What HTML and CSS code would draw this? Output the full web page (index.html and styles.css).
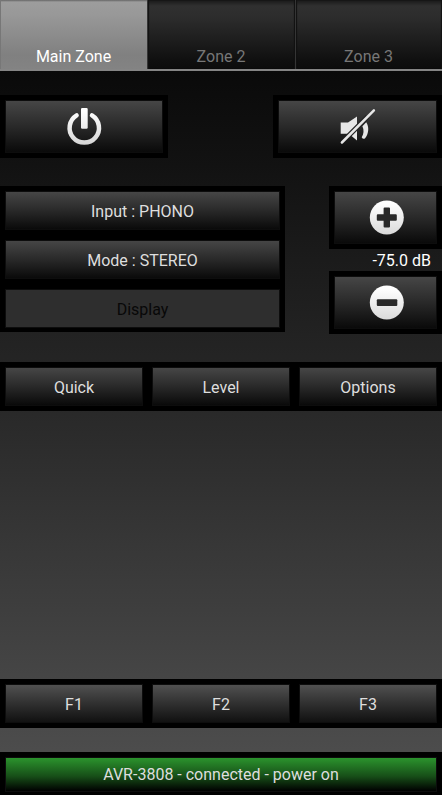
FILE: index.html
```html
<!DOCTYPE html>
<html lang="en">
<head>
<meta charset="utf-8">
<title>AVR Remote</title>
<link rel="stylesheet" href="styles.css">
</head>
<body>
<main class="app">
  <nav class="tabs">
    <a class="tab active">Main Zone</a>
    <a class="tab">Zone 2</a>
    <a class="tab">Zone 3</a>
  </nav>
  <section class="top-row">
    <div class="panel power">
      <button class="btn" aria-label="Power">
        <svg width="40" height="40" viewBox="0 0 40 40">
          <defs><linearGradient id="metal" x1="0" y1="0" x2="0" y2="40" gradientUnits="userSpaceOnUse"><stop offset="0.1" stop-color="#fff"/><stop offset="0.95" stop-color="#d6d6d6"/></linearGradient></defs>
          <path d="M12.600 8.400A14.700 14.700 0 1 0 28 8.400" fill="none" stroke="url(#metal)" stroke-width="4.500" stroke-linecap="round"/>
          <rect x="17" y="0.900" width="6.700" height="20.800" rx="1.200" fill="url(#metal)"/>
        </svg>
      </button>
    </div>
    <div class="panel mute">
      <button class="btn" aria-label="Mute">
        <svg width="40" height="40" viewBox="0.500 0 40 40">
          <g fill="#e6e6e6">
            <path d="M3.200 15.500H10.500L19.500 9.500V17.500L10.200 26.700H3.200Z"/>
            <path d="M14 29L19.500 23.500V33.500Z"/>
            <path d="M24.900 19.200L28.700 15.300C31.800 19.800 31.400 26.800 27.600 31.200Q25.600 32.800 24.200 30.300C26.300 27 26.700 23 24.900 19.200Z"/>
          </g>
          <path d="M10 29.800L30 9.700" stroke="#242424" stroke-width="4.800"/>
          <path d="M4.400 35.500L36.400 3.300" stroke="#e6e6e6" stroke-width="2.500" stroke-linecap="round"/>
        </svg>
      </button>
    </div>
  </section>
  <section class="control-row">
    <div class="panel settings">
      <button class="btn">Input : PHONO</button>
      <button class="btn">Mode : STEREO</button>
      <button class="btn disabled">Display</button>
    </div>
    <div class="volume">
      <div class="panel"><button class="btn" aria-label="Volume up">
        <svg width="36" height="36" viewBox="-0.800 0.500 36 36"><circle cx="18" cy="18" r="17" fill="url(#metal)"/><path d="M15.800 8h4.400q1 0 1 1v5.800H27q1 0 1 1v4.400q0 1-1 1h-5.800V27q0 1-1 1h-4.400q-1 0-1-1v-5.800H9q-1 0-1-1v-4.400q0-1 1-1h5.800V9q0-1 1-1Z" fill="#292929"/></svg>
      </button></div>
      <div class="level">-75.0 dB</div>
      <div class="panel"><button class="btn" aria-label="Volume down">
        <svg width="36" height="36" viewBox="-0.800 0.500 36 36"><circle cx="18" cy="18" r="17" fill="url(#metal)"/><rect x="8" y="14.800" width="20.500" height="6.600" rx="1" fill="#292929"/></svg>
      </button></div>
    </div>
  </section>
  <section class="panel trio menu">
    <button class="btn">Quick</button>
    <button class="btn">Level</button>
    <button class="btn">Options</button>
  </section>
  <section class="panel trio functions">
    <button class="btn">F1</button>
    <button class="btn">F2</button>
    <button class="btn">F3</button>
  </section>
  <footer class="panel status"><button class="btn connected">AVR-3808 - connected - power on</button></footer>
</main>
</body>
</html>
```
FILE: styles.css
```css
* { box-sizing: border-box; }
body { margin: 0; background: #000; }
.app {
  display: flex;
  flex-direction: column;
  width: 442px;
  height: 795px;
  overflow: hidden;
  font: 16px/20px Roboto, sans-serif;
  color: #fff;
  background: linear-gradient(#0a0a0a 71px, #121212 165px, #232323 345px, #292929 415px, #454545 675px, #4c4c4c 750px);
}
.tabs {
  display: grid;
  grid-template-columns: 147px 148px 147px;
  height: 71px;
  border-bottom: 2px solid #858585;
}
.tab {
  display: flex;
  align-items: flex-end;
  justify-content: center;
  padding: 0 1px 2px 0;
  color: #777;
  background: linear-gradient(#181818, #303030 6px, #2c2c2c 18px, #101010 60px, #0c0c0c);
  border-left: 1px solid #353535;
  box-shadow: inset 1px 0 1px #111, inset -1px 0 1px #111;
}
.tab.active {
  color: #fff;
  background: linear-gradient(#666, #9d9d9d 2px, #989898 15px, #808080 55px, #838383);
  border-left-color: #777;
  box-shadow: none;
}
.panel { background: #000; padding: 6px; }
.btn {
  display: flex;
  align-items: center;
  justify-content: center;
  width: 100%;
  height: 37px;
  padding: 2px 0 0;
  border: 0;
  border-radius: 0;
  font: inherit;
  color: #dedede;
  background: linear-gradient(#464646, #292929 50%, #0a0a0a);
  box-shadow: 0 0 0 1px #0d0d0d;
}
.btn svg { display: block; flex: none; }
.top-row {
  display: flex;
  justify-content: space-between;
  margin-top: 24px;
}
.power, .mute { width: 168px; height: 63px; }
.mute { width: 169px; }
.top-row .btn, .volume .btn { height: 51px; padding-top: 0; }
.top-row .btn { padding-top: 1px; }
.control-row {
  display: flex;
  justify-content: space-between;
  align-items: flex-start;
  margin-top: 28px;
  height: 148px;
}
.settings {
  display: grid;
  grid-template-rows: 37px 37px 37px;
  row-gap: 12px;
  width: 285px;
  height: 146px;
}
.btn.disabled { color: #080808; background: #2e2e2e; }
.volume { width: 113px; }
.volume .panel { height: 63px; }
.level { height: 22px; line-height: 24px; padding-right: 11px; text-align: right; }
.trio {
  display: grid;
  grid-template-columns: repeat(3, 1fr);
  column-gap: 11px;
  height: 49px;
}
.menu { margin-top: 28px; }
.functions { margin-top: auto; }
.functions .btn { background: linear-gradient(#505050, #303030 50%, #111); }
.status { height: 43px; margin-top: 24px; }
.btn.connected { height: 33px; padding-top: 1px; background: linear-gradient(#2b932d, #174f18 55%, #000); }
```
